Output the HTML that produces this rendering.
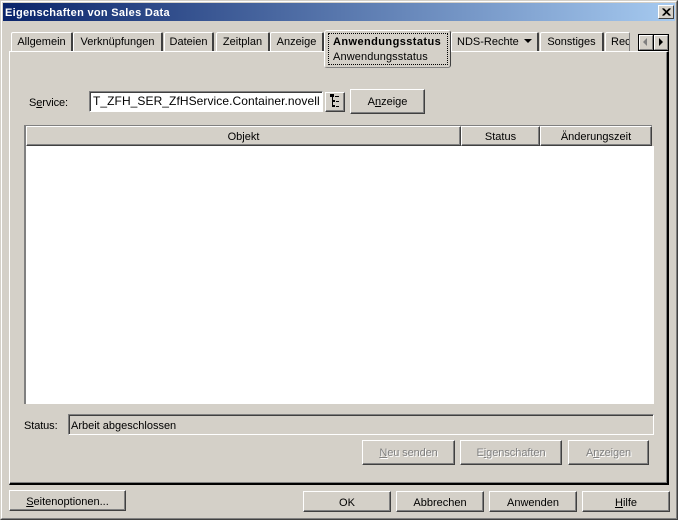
<!DOCTYPE html>
<html><head><meta charset="utf-8">
<style>
html,body{margin:0;padding:0}
body{width:678px;height:520px;overflow:hidden;position:relative;background:#d4d0c8;font-family:"Liberation Sans",sans-serif;font-size:11px;color:#000}
div,span.a{position:absolute;box-sizing:border-box}
.t{white-space:nowrap;line-height:13px}
.b{background:#d4d0c8;border:1px solid;border-color:#fff #404040 #404040 #fff;box-shadow:inset -1px -1px 0 #808080;text-align:center;line-height:25px;white-space:nowrap}
.d{color:#808080;text-shadow:1px 1px 0 #fff}
.h{background:#d4d0c8;border:1px solid;border-color:#fff #404040 #404040 #fff;box-shadow:inset -1px -1px 0 #808080;text-align:center;line-height:20px;height:20px;top:126px}
.tab{top:32px;height:19px;background:#d4d0c8;border-top:1px solid #fff;border-left:1px solid #fff;border-right:2px solid #404040;border-radius:2px 2px 0 0;text-align:center;line-height:18px;white-space:nowrap;overflow:hidden}
u{text-decoration:underline}
</style></head><body>
<!-- window frame -->
<div style="left:0;top:0;width:678px;height:520px;border:1px solid;border-color:#d4d0c8 #404040 #404040 #d4d0c8"></div>
<div style="left:1px;top:1px;width:676px;height:518px;border:1px solid;border-color:#fff #808080 #808080 #fff"></div>
<!-- title bar -->
<div style="left:3px;top:3px;width:672px;height:18px;background:linear-gradient(to right,#0a246a,#a6caf0)"></div>
<div class="t" style="left:5px;top:7px;color:#fff;font-weight:bold;font-size:11px;letter-spacing:.3px">Eigenschaften von Sales Data</div>
<div style="left:658px;top:5px;width:16px;height:14px;background:#d4d0c8;border:1px solid;border-color:#fff #404040 #404040 #fff">
<svg width="14" height="12" style="position:absolute;left:0;top:0"><path d="M3.5 2.5L10.5 9.5M4.5 2.5L11.5 9.5M10.5 2.5L3.5 9.5M11.5 2.5L4.5 9.5" stroke="#000" stroke-width="1" fill="none"/></svg></div>

<!-- panel -->
<div style="left:9px;top:51px;width:660px;height:434px;border:1px solid;border-color:#fff #000 #000 #fff;border-width:1px 2px 2px 1px;box-shadow:inset -1px -1px 0 #808080"></div>

<!-- tabs -->
<div class="tab" style="left:11px;width:62px">Allgemein</div>
<div class="tab" style="left:73px;width:90px">Verknüpfungen</div>
<div class="tab" style="left:164px;width:50px">Dateien</div>
<div class="tab" style="left:216px;width:54px">Zeitplan</div>
<div class="tab" style="left:270px;width:54px">Anzeige</div>
<div class="tab" style="left:451px;width:88px;text-align:left;padding-left:5px">NDS-Rechte
<svg width="9" height="5" style="position:absolute;left:72px;top:6px"><path d="M0 0H8L4 4Z" fill="#000"/></svg></div>
<div class="tab" style="left:540px;width:64px">Sonstiges</div>
<div class="tab" style="left:605px;width:25px;border-right:1px solid #808080;text-align:left;padding-left:5px">Rec</div>

<!-- active tab -->
<div style="left:324px;top:30px;width:127px;height:38px;background:#d4d0c8;border-top:1px solid #fff;border-left:1px solid #fff;border-right:1px solid #404040;border-bottom:1px solid #808080;border-radius:3px"></div>
<div style="left:328px;top:33px;width:120px;height:32px;border:1px dotted #000"></div>
<div class="t" style="left:333px;top:36px;font-weight:bold;letter-spacing:.42px">Anwendungsstatus</div>
<div class="t" style="left:333px;top:51px;letter-spacing:.12px">Anwendungsstatus</div>

<!-- tab scroll -->
<div style="left:638px;top:34px;width:31px;height:17px;background:#000"></div>
<div style="left:639px;top:35px;width:14px;height:15px;background:#d4d0c8;border:1px solid;border-color:#fff #808080 #808080 #fff">
<svg width="12" height="13" style="position:absolute;left:0;top:0"><path d="M7 2V10L3 6Z" fill="#808080"/></svg></div>
<div style="left:654px;top:35px;width:14px;height:15px;background:#d4d0c8;border:1px solid;border-color:#fff #808080 #808080 #fff">
<svg width="12" height="13" style="position:absolute;left:0;top:0"><path d="M4 2V10L8 6Z" fill="#000"/></svg></div>

<!-- service row -->
<div class="t" style="left:29px;top:97px;letter-spacing:-.1px">S<u>e</u>rvice:</div>
<div style="left:89px;top:91px;width:234px;height:21px;background:#fff;border:1px solid;border-color:#808080 #fff #fff #808080;box-shadow:inset 1px 1px 0 #404040"></div>
<div class="t" style="left:93px;top:95px;font-size:12px;letter-spacing:.07px">T_ZFH_SER_ZfHService.Container.novell</div>
<div class="b" style="left:325px;top:92px;width:20px;height:20px">
<svg width="18" height="18" style="position:absolute;left:0;top:0"><rect x="4" y="1" width="4" height="3" fill="#000"/><rect x="9" y="3" width="4" height="1" fill="#000"/><rect x="6" y="4" width="1" height="10" fill="#000"/><rect x="6" y="7" width="3" height="2" fill="#000"/><rect x="6" y="12" width="3" height="2" fill="#000"/><rect x="10" y="8" width="3" height="1" fill="#000"/><rect x="10" y="13" width="3" height="1" fill="#000"/></svg></div>
<div class="b" style="left:350px;top:89px;width:75px;height:25px;line-height:25px">A<u>n</u>zeige</div>

<!-- table -->
<div style="left:24px;top:125px;width:630px;height:279px;background:#fff;border-left:2px solid #808080;border-top:1px solid #808080"></div>
<div style="left:26px;top:145px;width:628px;height:1px;background:#808080"></div>
<div class="h" style="left:26px;width:435px">Objekt</div>
<div class="h" style="left:461px;width:79px">Status</div>
<div class="h" style="left:540px;width:112px">Änderungszeit</div>
<div style="left:652px;top:125px;width:2px;height:21px;background:#d4d0c8"></div>
<div style="left:24px;top:125px;width:628px;height:1px;background:#808080"></div>

<!-- status -->
<div class="t" style="left:24px;top:420px;letter-spacing:-.1px">Status:</div>
<div style="left:68px;top:414px;width:586px;height:21px;border:1px solid;border-color:#808080 #fff #fff #808080;box-shadow:inset 1px 1px 0 #404040"></div>
<div class="t" style="left:71px;top:420px">Arbeit abgeschlossen</div>

<!-- disabled buttons -->
<div class="b d" style="left:362px;top:440px;width:93px;height:25px;letter-spacing:-.1px"><u>N</u>eu senden</div>
<div class="b d" style="left:460px;top:440px;width:102px;height:25px;letter-spacing:-.05px">E<u>i</u>genschaften</div>
<div class="b d" style="left:568px;top:440px;width:81px;height:25px;letter-spacing:-.1px">A<u>n</u>zeigen</div>

<!-- bottom buttons -->
<div class="b" style="left:9px;top:490px;width:117px;height:21px;line-height:22px"><u>S</u>eitenoptionen...</div>
<div class="b" style="left:303px;top:491px;width:88px;height:21px;line-height:22px">OK</div>
<div class="b" style="left:396px;top:491px;width:88px;height:21px;line-height:22px">Abbrechen</div>
<div class="b" style="left:489px;top:491px;width:88px;height:21px;line-height:22px">Anwenden</div>
<div class="b" style="left:582px;top:491px;width:88px;height:21px;line-height:22px"><u>H</u>ilfe</div>
</body></html>
